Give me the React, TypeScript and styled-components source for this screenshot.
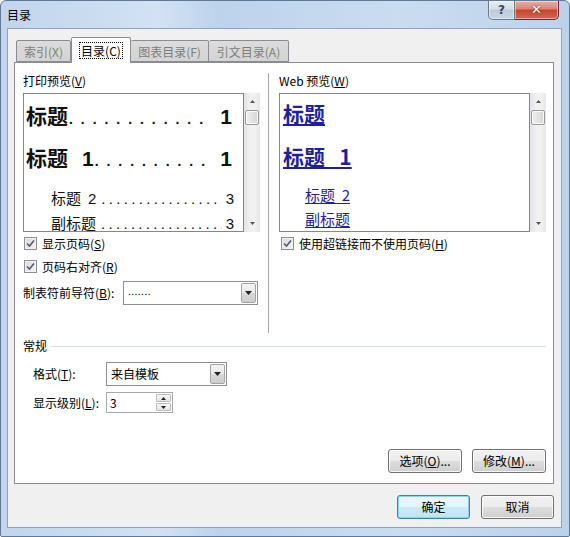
import React from 'react';
import styled, { createGlobalStyle } from 'styled-components';

const GlobalStyle = createGlobalStyle`
  html, body {
    margin: 0;
    padding: 0;
    background: #ffffff;
  }
  body {
    font-family: 'Noto Sans CJK SC', 'Noto Sans', sans-serif;
    font-size: 12px;
    line-height: 16px;
    color: #000;
  }
`;

const Window = styled.div`
  width: 570px;
  height: 537px;
  box-sizing: border-box;
  display: flex;
  flex-direction: column;
  border: 1px solid #5f7a99;
  border-radius: 6px 6px 2px 2px;
  background: linear-gradient(90deg, #c1d5ec 0%, #d2e2f3 28%, #bdd3eb 38%, #cadcf0 70%, #bcd2ea 100%);
  overflow: hidden;
`;

const TitleBar = styled.div`
  height: 27px;
  flex-shrink: 0;
  display: flex;
  align-items: flex-start;
  padding-left: 6px;
`;

const Title = styled.div`
  margin-top: 6px;
  font-size: 12px;
  line-height: 16px;
  color: #000;
`;

const CaptionButtons = styled.div`
  margin-left: auto;
  margin-right: 10px;
  display: flex;
`;

const CaptionButton = styled.div<{ $kind: 'help' | 'close' }>`
  width: ${p => (p.$kind === 'help' ? 25 : 43)}px;
  height: 18px;
  display: flex;
  align-items: center;
  justify-content: center;
  border: 1px solid ${p => (p.$kind === 'help' ? '#6b7a8c' : '#6e2a22')};
  border-top: none;
  border-left: ${p => (p.$kind === 'close' ? 'none' : undefined)};
  border-radius: ${p => (p.$kind === 'help' ? '0 0 0 5px' : '0 0 5px 0')};
  background: ${p =>
    p.$kind === 'help'
      ? 'linear-gradient(180deg, #e6edf5 0%, #d2dce8 45%, #bccadb 50%, #c9d6e5 100%)'
      : 'linear-gradient(180deg, #e8b0a6 0%, #d98372 45%, #c5442e 50%, #d06a52 100%)'};
  box-shadow: inset 0 0 0 1px rgba(255, 255, 255, 0.45);
  color: ${p => (p.$kind === 'help' ? '#3a4656' : '#ffffff')};
  font-family: 'DejaVu Sans', sans-serif;
  font-weight: 700;
  font-size: ${p => (p.$kind === 'help' ? 12 : 13)}px;
  text-shadow: ${p => (p.$kind === 'close' ? '0 0 2px #5a140c' : 'none')};
`;

const Client = styled.div`
  flex: 1;
  margin: 0 7px 8px 6px;
  border: 1px solid #8fa3ba;
  background: #f0f0f0;
  display: flex;
  flex-direction: column;
  padding: 8px 7px 8px 6px;
`;

const TabStrip = styled.div`
  height: 26px;
  flex-shrink: 0;
  display: flex;
  align-items: flex-end;
  padding-left: 2px;
  position: relative;
  z-index: 1;
`;

const Tab = styled.div<{ $width: number; $active?: boolean }>`
  width: ${p => p.$width}px;
  height: ${p => (p.$active ? 26 : 22)}px;
  margin-bottom: ${p => (p.$active ? 0 : 1)}px;
  box-sizing: border-box;
  display: flex;
  align-items: center;
  justify-content: center;
  border: 1px solid #898c95;
  border-bottom: ${p => (p.$active ? 'none' : '1px solid #898c95')};
  border-left: ${p => (p.$active ? '1px solid #898c95' : 'none')};
  border-radius: 2px 2px 0 0;
  background: ${p => (p.$active ? '#ffffff' : 'linear-gradient(180deg, #dcdcdc 0%, #d3d3d3 100%)')};
  color: ${p => (p.$active ? '#000' : '#7d7d7d')};
  padding-top: ${p => (p.$active ? 0 : 1)}px;
  &:first-child {
    border-left: 1px solid #898c95;
  }
`;

const FocusText = styled.span`
  outline: 1px dotted #000;
  outline-offset: 0;
  padding: 0 1px;
  line-height: 15px;
`;

const Panel = styled.div`
  flex: 1;
  margin-top: -1px;
  border: 1px solid #898c95;
  background: #ffffff;
  display: flex;
  flex-direction: column;
  padding: 0 7px 10px 8px;
`;

const TopSection = styled.div`
  height: 270px;
  box-sizing: border-box;
  padding-top: 10px;
  display: flex;
  flex-shrink: 0;
`;

const Column = styled.div<{ $width: number }>`
  width: ${p => p.$width}px;
  display: flex;
  flex-direction: column;
`;

const Divider = styled.div`
  width: 1px;
  background: #a6a6a6;
  margin: 0 10px 0 8px;
`;

const FieldLabel = styled.div`
  height: 16px;
  margin-bottom: 4px;
  white-space: nowrap;
`;

const PreviewFrame = styled.div`
  height: 139px;
  display: flex;
`;

const PreviewBox = styled.div`
  flex: 1;
  border: 1px solid #828790;
  background: #ffffff;
  overflow: hidden;
`;

const ScrollBar = styled.div`
  width: 16px;
  display: flex;
  flex-direction: column;
  background: linear-gradient(90deg, #e3e3e3 0%, #f1f1f1 40%, #f1f1f1 70%, #e6e6e6 100%);
`;

const ScrollArrow = styled.div`
  height: 17px;
  display: flex;
  align-items: center;
  justify-content: center;
`;

const ScrollThumb = styled.div`
  height: 15px;
  margin: 0 1px;
  box-sizing: border-box;
  border: 1px solid #9a9a9a;
  border-radius: 2px;
  background: linear-gradient(90deg, #f1f1f1 0%, #e3e3e3 50%, #d6d6d6 100%);
  box-shadow: inset 0 0 0 1px #fafafa;
`;

const ScrollTrack = styled.div`
  flex: 1;
`;

const PrintRow = styled.div<{ $level: 1 | 2; $top: number }>`
  display: flex;
  align-items: baseline;
  white-space: nowrap;
  margin-top: ${p => p.$top}px;
  padding-left: ${p => (p.$level === 1 ? 2 : 27)}px;
  padding-right: ${p => (p.$level === 1 ? 11 : 9)}px;
  font-size: ${p => (p.$level === 1 ? 21 : 15)}px;
  line-height: ${p => (p.$level === 1 ? 26 : 20)}px;
  font-weight: ${p => (p.$level === 1 ? 700 : 400)};
  color: #111;
`;

const HeadNum = styled.span<{ $level: 1 | 2 }>`
  margin-left: ${p => (p.$level === 1 ? 14 : 7)}px;
  font-family: 'Liberation Sans', sans-serif;
`;

const Leader = styled.span<{ $level: 1 | 2 }>`
  flex: 1;
  overflow: hidden;
  font-family: 'Liberation Sans', sans-serif;
  font-weight: 400;
  letter-spacing: ${p => (p.$level === 1 ? 6 : 3.3)}px;
  margin-right: ${p => (p.$level === 1 ? 10 : 4)}px;
  margin-left: ${p => (p.$level === 1 ? 0 : 5)}px;
`;

const PageNo = styled.span`
  font-family: 'Liberation Sans', sans-serif;
`;

const WebRow = styled.div<{ $level: 1 | 2; $top: number }>`
  margin-top: ${p => p.$top}px;
  padding-left: ${p => (p.$level === 1 ? 3 : 25)}px;
  font-size: ${p => (p.$level === 1 ? 21 : 15)}px;
  line-height: ${p => (p.$level === 1 ? 26 : 20)}px;
  font-weight: ${p => (p.$level === 1 ? 700 : 400)};
  white-space: pre;
`;

const WebLink = styled.span`
  color: #1f1f9c;
  text-decoration: underline;
  text-underline-offset: 2px;
`;

const CheckRow = styled.div<{ $indent?: number }>`
  height: 23px;
  display: flex;
  align-items: center;
  padding-left: ${p => p.$indent ?? 1}px;
  white-space: nowrap;
`;

const CheckBox = styled.span`
  width: 11px;
  height: 11px;
  border: 1px solid #8f8f8f;
  background: linear-gradient(135deg, #d9d9d9 0%, #f6f6f6 100%);
  box-shadow: inset 0 0 0 1px #f2f2f2;
  display: inline-flex;
  align-items: center;
  justify-content: center;
  margin-right: 5px;
`;

const FormRow = styled.div<{ $top: number; $height: number; $indent: number }>`
  display: flex;
  align-items: center;
  margin-top: ${p => p.$top}px;
  height: ${p => p.$height}px;
  padding-left: ${p => p.$indent}px;
  white-space: nowrap;
`;

const RowLabel = styled.span<{ $width: number }>`
  width: ${p => p.$width}px;
  flex-shrink: 0;
`;

const Combo = styled.div<{ $width: number }>`
  width: ${p => p.$width}px;
  height: 24px;
  box-sizing: border-box;
  border: 1px solid #8e8f8f;
  background: #ffffff;
  display: flex;
  align-items: stretch;
`;

const ComboText = styled.span<{ $dots?: boolean }>`
  flex: 1;
  display: flex;
  align-items: center;
  padding-left: 4px;
  font-size: ${p => (p.$dots ? 10 : 12)}px;
  letter-spacing: ${p => (p.$dots ? 0.5 : 0)}px;
  padding-bottom: ${p => (p.$dots ? 4 : 0)}px;
`;

const ComboButton = styled.span`
  width: 15px;
  margin: 1px;
  box-sizing: border-box;
  border: 1px solid #a3a3a3;
  border-radius: 2px;
  background: linear-gradient(180deg, #f4f4f4 0%, #e8e8e8 50%, #d8d8d8 51%, #cdcdcd 100%);
  display: flex;
  align-items: center;
  justify-content: center;
`;

const Spinner = styled.div`
  width: 67px;
  height: 21px;
  box-sizing: border-box;
  border: 1px solid #a9a9a9;
  background: #ffffff;
  display: flex;
`;

const SpinnerText = styled.span`
  flex: 1;
  padding-left: 3px;
  display: flex;
  align-items: center;
`;

const SpinnerButtons = styled.span`
  width: 15px;
  display: flex;
  flex-direction: column;
  gap: 1px;
  padding: 1px 1px 1px 0;
`;

const SpinnerButton = styled.span`
  flex: 1;
  border: 1px solid #bdbdbd;
  border-radius: 1px;
  background: linear-gradient(180deg, #f7f7f7 0%, #e4e4e4 100%);
  display: flex;
  align-items: center;
  justify-content: center;
`;

const GroupHeader = styled.div`
  margin-top: 5px;
  height: 16px;
  display: flex;
  align-items: center;
`;

const GroupLine = styled.span`
  flex: 1;
  height: 1px;
  margin-left: 4px;
  background: #d5dfe5;
`;

const ButtonRow = styled.div<{ $gap: number }>`
  margin-top: auto;
  display: flex;
  justify-content: flex-end;
  gap: ${p => p.$gap}px;
`;

const Footer = styled(ButtonRow)`
  margin-top: 11px;
  flex-shrink: 0;
`;

const PushButton = styled.button<{ $width: number; $default?: boolean }>`
  width: ${p => p.$width}px;
  height: 24px;
  padding: 0;
  font: inherit;
  color: #000;
  border: 1px solid ${p => (p.$default ? '#3c7fb1' : '#707070')};
  border-radius: 3px;
  background: ${p =>
    p.$default
      ? 'linear-gradient(180deg, #eef8fd 0%, #e3f3fb 48%, #cbeaf8 52%, #bfe4f6 100%)'
      : 'linear-gradient(180deg, #f2f2f2 0%, #ebebeb 48%, #dddddd 52%, #cfcfcf 100%)'};
  box-shadow: inset 0 0 0 1px ${p => (p.$default ? '#8fd3ee' : 'rgba(255, 255, 255, 0.8)')};
`;

const Check = () => (
  <svg width="9" height="9" viewBox="0 0 9 9">
    <path d="M1 4.5 L3.5 7 L8 1.5" fill="none" stroke="#4f5d78" strokeWidth="1.6" />
  </svg>
);

const DownTri = ({ size = 7 }: { size?: number }) => (
  <svg width={size} height={Math.ceil(size / 2)} viewBox="0 0 7 4">
    <path d="M0 0 H7 L3.5 4 Z" fill="#222" />
  </svg>
);

const UpTri = ({ size = 7 }: { size?: number }) => (
  <svg width={size} height={Math.ceil(size / 2)} viewBox="0 0 7 4">
    <path d="M0 4 H7 L3.5 0 Z" fill="#222" />
  </svg>
);

const VScroll = () => (
  <ScrollBar>
    <ScrollArrow>
      <svg width="5" height="3" viewBox="0 0 5 3">
        <path d="M0 3 H5 L2.5 0 Z" fill="#555" />
      </svg>
    </ScrollArrow>
    <ScrollThumb />
    <ScrollTrack />
    <ScrollArrow>
      <svg width="5" height="3" viewBox="0 0 5 3">
        <path d="M0 0 H5 L2.5 3 Z" fill="#555" />
      </svg>
    </ScrollArrow>
  </ScrollBar>
);

const DOTS = '.'.repeat(60);

type Row = { level: 1 | 2; top: number; text: string; num?: string; page?: string };

const printRows: Row[] = [
  { level: 1, top: 8, text: '标题', page: '1' },
  { level: 1, top: 14, text: '标题', num: '1', page: '1' },
  { level: 2, top: 16, text: '标题', num: '2', page: '3' },
  { level: 2, top: 4, text: '副标题', page: '3' },
];

const webRows: Row[] = [
  { level: 1, top: 6, text: '标题' },
  { level: 1, top: 17, text: '标题   1' },
  { level: 2, top: 16, text: '标题  2' },
  { level: 2, top: 4, text: '副标题' },
];

const tabs = [
  { label: '索引(X)', width: 55 },
  { label: '目录(C)', width: 60, active: true },
  { label: '图表目录(F)', width: 78 },
  { label: '引文目录(A)', width: 80 },
];

export default function App() {
  return (
    <>
      <GlobalStyle />
      <Window>
        <TitleBar>
          <Title>目录</Title>
          <CaptionButtons>
            <CaptionButton $kind="help">?</CaptionButton>
            <CaptionButton $kind="close">✕</CaptionButton>
          </CaptionButtons>
        </TitleBar>

        <Client>
          <TabStrip>
            {tabs.map(t => (
              <Tab key={t.label} $width={t.width} $active={t.active}>
                {t.active ? <FocusText>{t.label}</FocusText> : t.label}
              </Tab>
            ))}
          </TabStrip>

          <Panel>
            <TopSection>
              <Column $width={237}>
                <FieldLabel>
                  打印预览(<u>V</u>)
                </FieldLabel>
                <PreviewFrame>
                  <PreviewBox>
                    {printRows.map((r, i) => (
                      <PrintRow key={i} $level={r.level} $top={r.top}>
                        <span>{r.text}</span>
                        {r.num && <HeadNum $level={r.level}>{r.num}</HeadNum>}
                        <Leader $level={r.level}>{DOTS}</Leader>
                        <PageNo>{r.page}</PageNo>
                      </PrintRow>
                    ))}
                  </PreviewBox>
                  <VScroll />
                </PreviewFrame>
                <CheckRow>
                  <CheckBox>
                    <Check />
                  </CheckBox>
                  显示页码(<u>S</u>)
                </CheckRow>
                <CheckRow>
                  <CheckBox>
                    <Check />
                  </CheckBox>
                  页码右对齐(<u>R</u>)
                </CheckRow>
                <FormRow $top={3} $height={24} $indent={0}>
                  <RowLabel $width={100}>
                    制表符前导符(<u>B</u>):
                  </RowLabel>
                  <Combo $width={135}>
                    <ComboText $dots>.......</ComboText>
                    <ComboButton>
                      <DownTri />
                    </ComboButton>
                  </Combo>
                </FormRow>
              </Column>

              <Divider />

              <Column $width={267}>
                <FieldLabel>
                  Web 预览(<u>W</u>)
                </FieldLabel>
                <PreviewFrame>
                  <PreviewBox>
                    {webRows.map((r, i) => (
                      <WebRow key={i} $level={r.level} $top={r.top}>
                        <WebLink>{r.text}</WebLink>
                      </WebRow>
                    ))}
                  </PreviewBox>
                  <VScroll />
                </PreviewFrame>
                <CheckRow $indent={2}>
                  <CheckBox>
                    <Check />
                  </CheckBox>
                  使用超链接而不使用页码(<u>H</u>)
                </CheckRow>
              </Column>
            </TopSection>

            <GroupHeader>
              常规
              <GroupLine />
            </GroupHeader>
            <FormRow $top={8} $height={24} $indent={10}>
              <RowLabel $width={73}>
                格式(<u>T</u>):
              </RowLabel>
              <Combo $width={121}>
                <ComboText>来自模板</ComboText>
                <ComboButton>
                  <DownTri />
                </ComboButton>
              </Combo>
            </FormRow>
            <FormRow $top={6} $height={21} $indent={10}>
              <RowLabel $width={73}>
                显示级别(<u>L</u>):
              </RowLabel>
              <Spinner>
                <SpinnerText>3</SpinnerText>
                <SpinnerButtons>
                  <SpinnerButton>
                    <UpTri size={5} />
                  </SpinnerButton>
                  <SpinnerButton>
                    <DownTri size={5} />
                  </SpinnerButton>
                </SpinnerButtons>
              </Spinner>
            </FormRow>

            <ButtonRow $gap={10}>
              <PushButton $width={74}>
                选项(<u>O</u>)...
              </PushButton>
              <PushButton $width={74}>
                修改(<u>M</u>)...
              </PushButton>
            </ButtonRow>
          </Panel>

          <Footer $gap={11}>
            <PushButton $width={73} $default>
              确定
            </PushButton>
            <PushButton $width={73}>取消</PushButton>
          </Footer>
        </Client>
      </Window>
    </>
  );
}
